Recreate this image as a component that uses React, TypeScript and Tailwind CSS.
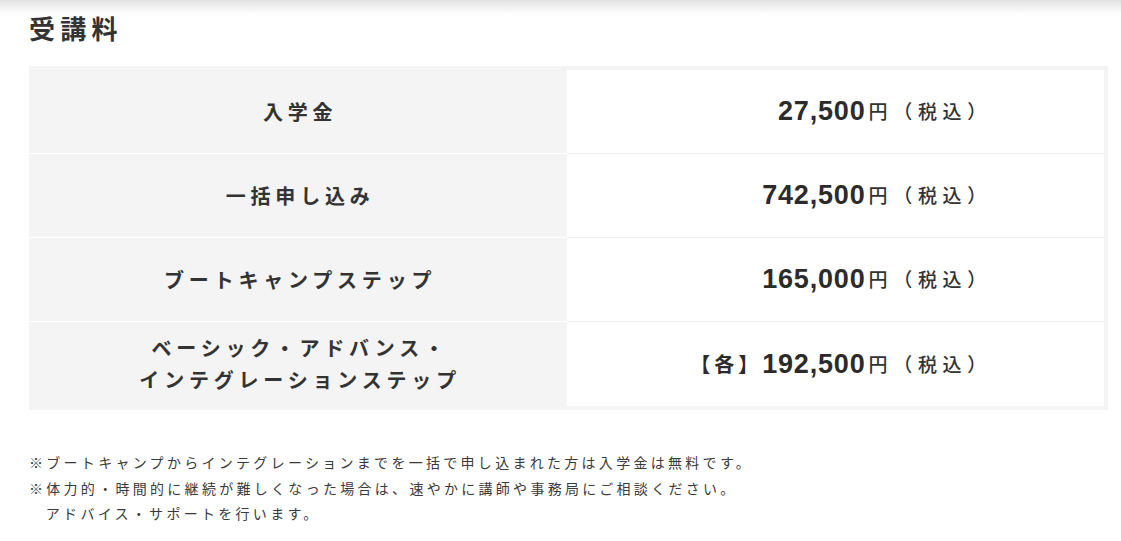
const jp = "font-['Noto_Sans_CJK_JP',sans-serif]";
const num = "font-['Liberation_Sans',Arial,sans-serif]";

const rows = [
  { label: ["入学金"], prefix: "", price: "27,500" },
  { label: ["一括申し込み"], prefix: "", price: "742,500" },
  { label: ["ブートキャンプステップ"], prefix: "", price: "165,000" },
  { label: ["ベーシック・アドバンス・", "インテグレーションステップ"], prefix: "【各】", price: "192,500" },
];

const App = () => {
  return (
    <div className={`w-full min-h-[541px] bg-white text-[#333] ${jp}`}>
      <div className="h-[14px] bg-gradient-to-b from-[#e2e2e2] to-white"></div>
      <div className="pl-[29px] pr-[13px]">
        <h2 className="text-[26px] leading-[28px] font-bold tracking-[0.2em] text-[#333]">受講料</h2>
        <div className="mt-[24px] bg-[#f4f4f4] pt-1 pr-1 pb-1">
          {rows.map((row, i) => (
            <div key={i} className="grid grid-cols-2 h-[84px]">
              <div className={`flex flex-col items-center justify-center bg-[#f4f4f4] ${i < rows.length - 1 ? "border-b border-white" : ""}`}>
                {row.label.map((l, j) => (
                  <p key={j} className="text-[20px] leading-[32px] font-bold tracking-[0.24em] text-[#333] pl-[0.24em]">{l}</p>
                ))}
              </div>
              <div className={`flex items-center justify-end pr-[112px] bg-white ${i < rows.length - 1 ? "border-b border-[#eeeeee]" : ""}`}>
                {row.prefix && <span className="text-[20px] font-bold tracking-[0.2em] text-[#2b2b2b]">{row.prefix}</span>}
                <span className={`${num} text-[27px] font-bold tracking-[0.03em] text-[#2b2b2b] mr-[3px]`}>{row.price}</span>
                <span className="text-[19px] tracking-[0.3em] font-medium">円（税込）</span>
              </div>
            </div>
          ))}
        </div>
        <div className="mt-[40px] text-[14px] leading-[25.5px] tracking-[0.235em] text-[#3a3a3a]">
          <p>※ブートキャンプからインテグレーションまでを一括で申し込まれた方は入学金は無料です。</p>
          <p>※体力的・時間的に継続が難しくなった場合は、速やかに講師や事務局にご相談ください。</p>
          <p className="pl-[1.2em]">アドバイス・サポートを行います。</p>
        </div>
      </div>
    </div>
  );
};

export default App;
